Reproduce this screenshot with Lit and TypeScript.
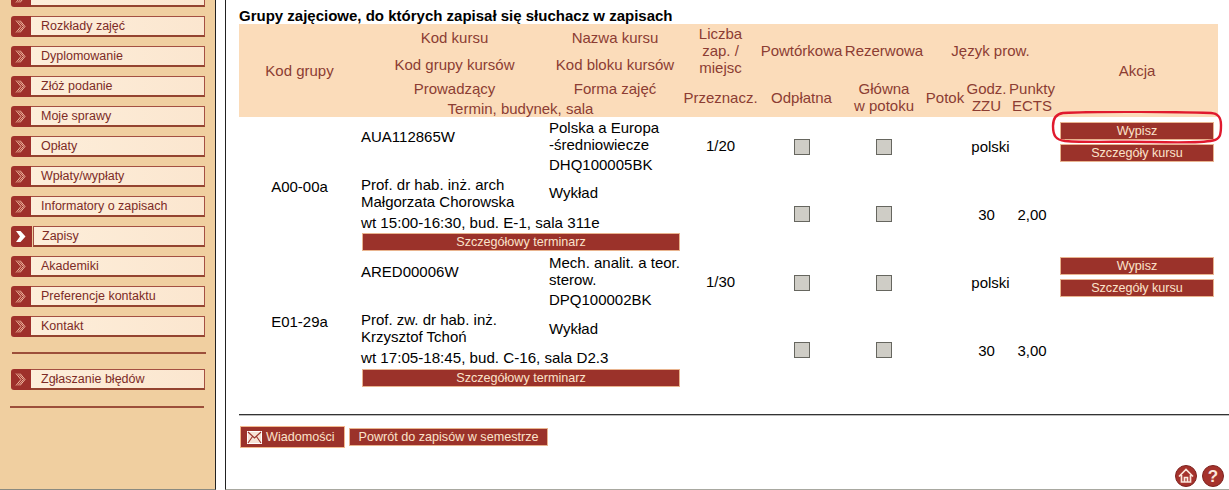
import { LitElement, html, css } from "lit";
import { customElement } from "lit/decorators.js";

const menu = ["Rozkłady zajęć","Dyplomowanie","Złóż podanie","Moje sprawy","Opłaty","Wpłaty/wypłaty","Informatory o zapisach","Zapisy","Akademiki","Preferencje kontaktu","Kontakt"];
const groups = [
  { id:"A00-00a", code:"AUA112865W", name:["Polska a Europa","-średniowiecze"], block:"DHQ100005BK", lect:["Prof. dr hab. inż. arch","Małgorzata Chorowska"], time:"wt 15:00-16:30, bud. E-1, sala 311e", cnt:"1/20", h:"30", ects:"2,00" },
  { id:"E01-29a", code:"ARED00006W", name:["Mech. analit. a teor.","sterow."], block:"DPQ100002BK", lect:["Prof. zw. dr hab. inż.","Krzysztof Tchoń"], time:"wt 17:05-18:45, bud. C-16, sala D2.3", cnt:"1/30", h:"30", ects:"3,00" },
];

const chevron = html`<svg width="20" height="21" viewBox="0 0 20 21"><path d="M5 4.5 L10 10.5 L5 16.5 M9 4.5 L14 10.5 L9 16.5 M7 4.5 L12.5 10.5 L7 16.5" fill="none" stroke="#f0b8a0" stroke-width="1"/></svg>`;
const solid = html`<svg width="20" height="21" viewBox="0 0 20 21"><path d="M5 5 H9.5 L14.5 10.5 L9.5 16 H5 L9 10.5 Z" fill="#fff"/></svg>`;

@customElement("app-root")
export class AppRoot extends LitElement {
  static styles = css`
    :host { display:block; width:1229px; height:490px; overflow:hidden; position:relative; background:#fff;
      font-family:"Liberation Sans",Arial,sans-serif; color:#000; }
    .page { display:flex; height:490px; }
    .side { width:215px; height:489px; box-sizing:content-box; background:#f0cfa0; border-right:1px solid #222; border-bottom:1px solid #8a8a80; overflow:hidden; flex:none; }
    .nav { margin-top:-14px; padding-left:11px; display:flex; flex-direction:column; gap:9px; }
    .item { display:flex; width:194px; height:21px; }
    .ico { width:20px; height:21px; flex:none; background:#9e302b; border-radius:3px 0 0 3px; }
    .lbl { flex:1; box-sizing:border-box; height:21px; padding-left:10px; font-size:12.5px; line-height:18px; color:#7c2b26;
      background:linear-gradient(90deg,#fdeeda,#fbe6cf); border:1px solid #a44f42; border-left:none; border-bottom:2px solid #94432f; white-space:nowrap; }
    .item.on .ico { width:21px; margin-right:1px; }
    .item.on .lbl { border-left:1px solid #a44f42; padding-left:8px; }
    .rule { height:2px; background:#9c4f3a; width:194px; }
    .r1 { margin:6px 0 6px 1px; }
    .r2 { margin:7px 0 0 -1px; }
    .gutter { width:9px; flex:none; }
    .main { flex:1; border-left:1px solid #222; padding-left:13px; min-width:0; position:relative; border-bottom:1px solid #a8a8a0; height:489px; }
    h1 { margin:0; height:24px; box-sizing:border-box; padding-top:7px; font-size:15px; line-height:17px; font-weight:700; white-space:nowrap; }
    .grid { display:grid; grid-template-columns:121px 189px 132px 79px 83px 82px 40px 43px 48px 162px; width:979px; font-size:15px; }
    .head { grid-template-rows:27px 26px 22px 18px; background:#fbdcba; color:#8c3d33; line-height:17px; text-align:center; }
    .head div { display:flex; align-items:center; justify-content:center; white-space:nowrap; }
    .head .two { flex-direction:column; }
    .body { grid-template-rows:38px 19px 37px 22px 20px; line-height:17px; }
    .body > div { display:flex; align-items:center; white-space:nowrap; min-width:0; }
    .c { justify-content:center; text-align:center; }
    .col { flex-direction:column; align-items:flex-start !important; justify-content:center; }
    .l { padding-left:1px; }
    .id { padding-top:3px; }
    .box { padding-top:2px; }
    .low { padding-top:1px; }
    .later .up { padding-bottom:2px; }
    .later .id { padding-top:1px; }
    .time { font-size:15.15px; }
    .cb { width:16px; height:16px; box-sizing:border-box; background:#cfcdc6; border:1px solid #66665f; }
    .btn { background:#9b322a; color:#fbe3cb; font-size:12.6px; text-align:center; box-sizing:border-box; border:1px solid #e9b48f; white-space:nowrap; }
    .term { height:18px; line-height:16px; width:318px; margin-left:2px; }
    .acts { flex-direction:column; align-items:flex-start !important; justify-content:flex-start; padding:5px 0 0 4px; gap:4px; }
    .later .acts { padding-top:4px; }
    .acts .btn { width:154px; height:18px; line-height:16px; }
    .hr { margin-top:25px; height:1px; background:#333; border-bottom:1px solid #bbb; }
    .foot { display:flex; align-items:center; gap:4px; margin:10px 0 0 1px; }
    .wiad { width:105px; height:22px; line-height:20px; display:flex; align-items:center; justify-content:flex-start; padding-left:6px; gap:4px; border-color:#f3b98e; }
    .back { width:199px; height:18px; line-height:16px; }
    .corner { position:absolute; right:5px; bottom:2px; display:flex; gap:5px; }
    .mark { position:absolute; left:825px; top:111px; pointer-events:none; }
  `;

  render() {
    return html`<div class="page">
      <aside class="side"><div class="nav">
        <div class="item"><div class="ico">${chevron}</div><div class="lbl"></div></div>
        ${menu.map(m => html`<div class="item ${m==="Zapisy"?"on":""}"><div class="ico">${m==="Zapisy"?solid:chevron}</div><div class="lbl">${m}</div></div>`)}
        <div class="rule r1"></div>
        <div class="item"><div class="ico">${chevron}</div><div class="lbl">Zgłaszanie błędów</div></div>
        <div class="rule r2"></div>
      </div></aside>
      <div class="gutter"></div>
      <main class="main">
        <h1>Grupy zajęciowe, do których zapisał się słuchacz w zapisach</h1>
        <div class="grid head">
          <div style="grid-area:1/1/5/2">Kod grupy</div>
          <div style="grid-area:1/2/2/3">Kod kursu</div>
          <div style="grid-area:1/3/2/4">Nazwa kursu</div>
          <div class="two" style="grid-area:1/4/3/5">Liczba<br>zap. /<br>miejsc</div>
          <div style="grid-area:1/5/3/6">Powtórkowa</div>
          <div style="grid-area:1/6/3/7">Rezerwowa</div>
          <div style="grid-area:1/7/3/10">Język prow.</div>
          <div style="grid-area:1/10/5/11">Akcja</div>
          <div style="grid-area:2/2/3/3">Kod grupy kursów</div>
          <div style="grid-area:2/3/3/4">Kod bloku kursów</div>
          <div style="grid-area:3/2/4/3">Prowadzący</div>
          <div style="grid-area:3/3/4/4">Forma zajęć</div>
          <div style="grid-area:4/2/5/4">Termin, budynek, sala</div>
          <div style="grid-area:3/4/5/5">Przeznacz.</div>
          <div style="grid-area:3/5/5/6">Odpłatna</div>
          <div class="two" style="grid-area:3/6/5/7">Główna<br>w potoku</div>
          <div style="grid-area:3/7/5/8">Potok</div>
          <div class="two" style="grid-area:3/8/5/9">Godz.<br>ZZU</div>
          <div class="two" style="grid-area:3/9/5/10">Punkty<br>ECTS</div>
        </div>
        ${groups.map((g, i) => html`<div class="grid body ${i ? "later" : ""}">
          <div class="c id" style="grid-area:1/1/6/2">${g.id}</div>
          <div class="l up" style="grid-area:1/2/2/3">${g.code}</div>
          <div class="col up" style="grid-area:1/3/2/4">${g.name.map(n => html`<span>${n}</span>`)}</div>
          <div class="up" style="grid-area:2/3/3/4">${g.block}</div>
          <div class="c" style="grid-area:1/4/3/5">${g.cnt}</div>
          <div class="c box" style="grid-area:1/5/3/6"><span class="cb"></span></div>
          <div class="c box" style="grid-area:1/6/3/7"><span class="cb"></span></div>
          <div class="c box" style="grid-area:1/7/3/10">polski</div>
          <div class="acts" style="grid-area:1/10/3/11"><span class="btn">Wypisz</span><span class="btn">Szczegóły kursu</span></div>
          <div class="col l up" style="grid-area:3/2/4/3">${g.lect.map(n => html`<span>${n}</span>`)}</div>
          <div style="grid-area:3/3/4/4">Wykład</div>
          <div class="l time up" style="grid-area:4/2/5/4">${g.time}</div>
          <div style="grid-area:5/2/6/4;align-items:flex-start"><span class="btn term">Szczegółowy terminarz</span></div>
          <div class="c low" style="grid-area:3/5/6/6"><span class="cb"></span></div>
          <div class="c low" style="grid-area:3/6/6/7"><span class="cb"></span></div>
          <div class="c low" style="grid-area:3/8/6/9">${g.h}</div>
          <div class="c low" style="grid-area:3/9/6/10">${g.ects}</div>
        </div>`)}
        <div class="hr"></div>
        <div class="foot">
          <span class="btn wiad"><svg width="15" height="13" viewBox="0 0 15 13"><rect x=".5" y=".5" width="14" height="12" fill="#f6e3d6" stroke="#fff"/><path d="M1 1 L7.5 7 L14 1 M1 12 L5.5 5.5 M14 12 L9.5 5.5" fill="none" stroke="#9b322a" stroke-width="1.1"/></svg>Wiadomości</span>
          <span class="btn back">Powrót do zapisów w semestrze</span>
        </div>
        <svg class="mark" width="172" height="34" viewBox="0 0 172 34"><path d="M12 2 C50 0 130 1 160 2 C167 2.5 170 6 170 14 C170 24 169 28 162 29.5 C150 32 120 31.5 100 31 C70 30 40 32 14 30 C5 29 2 25 2 15 C2 7 5 3 12 2 Z" fill="none" stroke="#e01a2e" stroke-width="2.4"/></svg>
        <div class="corner">
          <svg width="22" height="22" viewBox="0 0 22 22"><circle cx="11" cy="11" r="10.5" fill="#a5322c" stroke="#7d2420"/><path d="M4 11.5 L11 4.5 L18 11.5 M6.5 10 V17 H15.5 V10 M9.5 17 V12.5 H12.5 V17" fill="none" stroke="#fbe7dc" stroke-width="1.7"/></svg>
          <svg width="22" height="22" viewBox="0 0 22 22"><circle cx="11" cy="11" r="10.5" fill="#a5322c" stroke="#7d2420"/><text x="11" y="17" text-anchor="middle" font-size="17" font-weight="700" font-family="Liberation Sans" fill="#fbe7dc">?</text></svg>
        </div>
      </main>
    </div>`;
  }
}
